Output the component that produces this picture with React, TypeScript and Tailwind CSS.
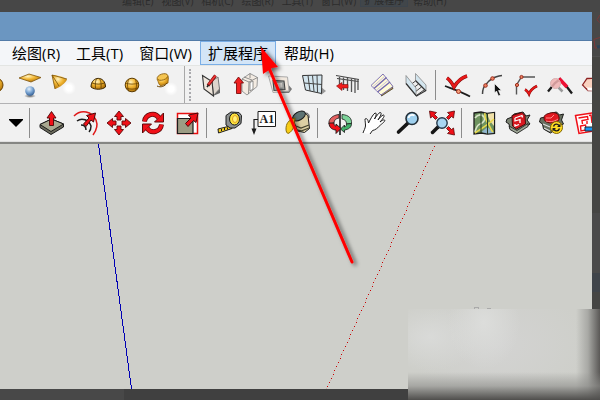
import React from 'react'

type Tool = { name: string; art: React.ReactNode }

const ghostMenus = ['编辑(E)', '视图(V)', '相机(C)', '绘图(R)', '工具(T)', '窗口(W)', '扩展程序', '帮助(H)']
const menus = ['绘图(R)', '工具(T)', '窗口(W)', '扩展程序', '帮助(H)']

const red = '#f01018'
const ink = '#1c1c1c'

// dotted axis, one dot every four pixels down
const axisDots = Array.from({ length: 61 }, (_, i) => ({
  x: Math.round(434 - i * 1.78),
  y: 146 + i * 4,
}))

const Defs = () => (
  <svg className="absolute size-0" aria-hidden="true">
    <defs>
      <radialGradient id="gold" cx="0.4" cy="0.3" r="0.75">
        <stop offset="0" stopColor="#fff3c0" />
        <stop offset="0.45" stopColor="#f2b632" />
        <stop offset="1" stopColor="#a86a06" />
      </radialGradient>
      <radialGradient id="steel" cx="0.4" cy="0.3" r="0.75">
        <stop offset="0" stopColor="#e4f0fb" />
        <stop offset="0.5" stopColor="#7ba6d4" />
        <stop offset="1" stopColor="#2d578c" />
      </radialGradient>
      <radialGradient id="mist">
        <stop offset="0.4" stopColor="#fff" />
        <stop offset="1" stopColor="#fff" stopOpacity="0" />
      </radialGradient>
      <radialGradient id="shade">
        <stop offset="0" stopColor="#222" stopOpacity="0.7" />
        <stop offset="1" stopColor="#222" stopOpacity="0" />
      </radialGradient>
    </defs>
  </svg>
)

const solidTools: Tool[] = [
  {
    name: 'Sphere',
    art: <circle cx="17" cy="17" r="7" fill="url(#gold)" stroke="#6b4300" />,
  },
  {
    name: 'Plane on sphere',
    art: (
      <>
        <path d="M6 10 16 6l12 3.500L18 14z" fill="url(#gold)" stroke="#7d5510" strokeWidth="0.8" />
        <ellipse cx="17" cy="28" rx="6" ry="2" fill="url(#shade)" />
        <circle cx="17" cy="23" r="4.800" fill="url(#steel)" />
      </>
    ),
  },
  {
    name: 'Cone',
    art: (
      <>
        <path d="M5 7c5 0 11 2 15 4.500-1 3-7 8-12 9.500z" fill="url(#gold)" />
        <path d="M5 7l3 14M5 7l7 11M5 7l15 4" stroke="#7a5208" strokeWidth="0.8" fill="none" />
        <circle cx="22" cy="20" r="7" fill="url(#mist)" />
      </>
    ),
  },
  {
    name: 'Dome',
    art: (
      <>
        <path d="M10 19C10 7.500 24.500 7.500 24.500 19 21 22 13.500 22 10 19z" fill="url(#gold)" stroke="#3a2500" />
        <path d="M14.500 20C14 14 15 11 16 10.500M20 20c.5-6-.5-8-2-9.500M11 15c4 1.500 9 1.500 12.500 0" stroke="#5c3b00" strokeWidth="0.8" fill="none" />
      </>
    ),
  },
  {
    name: 'Globe',
    art: (
      <>
        <circle cx="17" cy="17" r="6.800" fill="url(#gold)" stroke="#5c3b00" />
        <path d="M14 11c-2 4-2 8 0 12.500M20 11c2 4 2 8 0 12.500M10.500 15c4 1.500 9 1.500 13 0M11 20c4 1.500 8 1.500 12 0" stroke="#6b4300" strokeWidth="0.8" fill="none" />
      </>
    ),
  },
  {
    name: 'Lathe',
    art: (
      <>
        <path d="M8 11c2 4 1 5 4 7l7-3c0-3 1-4 0-7z" fill="url(#gold)" stroke="#8a5c08" strokeWidth="0.7" />
        <ellipse cx="13.500" cy="9" rx="5.500" ry="3" transform="rotate(-18 13.500 9)" fill="#f5c552" stroke="#8a5c08" strokeWidth="0.8" />
        <path d="M8 18c4 2 8 0 10-3" stroke="#6b4300" fill="none" />
        <circle cx="22" cy="21" r="7" fill="url(#mist)" />
      </>
    ),
  },
]

const wallTools: Tool[] = [
  {
    name: 'Edit wall',
    art: (
      <>
        <path d="M17 13l8 7v5l-7 3z" fill="#666" />
        <path d="M17 13l6-4 1.500 12-6 6.500z" fill="#ddd5cc" stroke="#777" />
        <path d="M7.500 7.500 17 13.500l1.500 14.500L9 21z" fill="#efe6dc" stroke="#333" strokeWidth="1.100" />
        <path d="M20.500 7.500 13 17.500" stroke="#7d0c0c" strokeWidth="3.200" />
        <path d="M20.500 7.500 13.500 16.500" stroke="#f03434" strokeWidth="1.800" />
        <path d="M13.500 17 12 19" stroke="#222" strokeWidth="1.500" />
      </>
    ),
  },
  {
    name: 'Raise wall',
    art: (
      <>
        <path d="M13 11 21 5.500l7.500 4-.5 9L18 27l-5-4z" fill="#f3ebe2" stroke="#999" />
        <path d="M13 11l7 3 8.500-4.500M20 14l-.5 12M21 5.500V10M15 9l8 3" fill="none" stroke="#777" strokeWidth="0.800" />
        <path d="M21 14.500l3-1.500v8l-3 2z" fill="#fff" stroke="#777" strokeWidth="0.800" />
        <path d="M9.500 9 14.500 15H12v10.500H7.500V15H5z" fill="#f02020" stroke="#7d0c0c" strokeWidth="0.900" />
      </>
    ),
  },
  {
    name: 'Opening',
    art: (
      <>
        <path d="M24 15l5 6-3 4H14z" fill="#777" />
        <path d="M5.500 8 24.500 9l1.500 14L10 24.500z" fill="#f1e8de" stroke="#aaa" />
        <path d="M10 12.500l11 .5 1 8.500-11 1z" fill="#a4a6a4" stroke="#444" strokeWidth="1.100" />
        <path d="M13 15h6l.5 4.500-6 .5z" fill="#e2dfda" />
      </>
    ),
  },
  {
    name: 'Curtain wall',
    art: (
      <>
        <path d="M24 19l5 4-5 4z" fill="#999" />
        <path d="M5.500 7.500 25 7l-.5 18.500L8.500 22z" fill="#d3e5ee" stroke="#333" />
        <path d="M11 7.500l2 15.500M15.500 7.500l1.500 16M20 7l.5 17.500M7 15l18 1.500" stroke="#444" fill="none" />
      </>
    ),
  },
  {
    name: 'Fence',
    art: (
      <>
        <path d="M5 7.500l23 4M6 10.500l21.500 3" stroke="#444" strokeWidth="1.200" />
        <path d="M8.500 9v7M12.500 9.500V22M16.500 10v13M20.500 10.500V24M24 11v14M27 11.500V22" stroke="#555" strokeWidth="1.300" />
        <path d="M5.500 18 11 14.500v2h6v3.500h-6v2.500z" fill="#f01c1c" stroke="#7d0c0c" strokeWidth="0.600" />
      </>
    ),
  },
  {
    name: 'Stairs',
    art: (
      <>
        <path d="M16.500 28 28 20.500l-1.500-3.500-10 7z" fill="#a48c50" stroke="#443a20" strokeWidth="0.800" />
        <path d="M6 17.500 18 6l10 12.500-12 8.500z" fill="#fffbd6" stroke="#7468b0" strokeWidth="0.900" />
        <path d="M9 20.500 21.500 9.500M12.500 24 25 14" stroke="#7468b0" strokeWidth="1.500" />
        <path d="M7.500 19 20 8M11 22.500 23.500 12" stroke="#c4bce4" strokeWidth="0.900" />
      </>
    ),
  },
  {
    name: 'Escalator',
    art: (
      <>
        <path d="M9 16l7-6 10 11-7 6z" fill="#eee" />
        <path d="M10 18l6.500-5M13 21l6.500-5M16 24l6.500-5M18 27l7-5" stroke="#444" />
        <path d="M7 7.500v8L17 28v-8z" fill="#d3e5ee" stroke="#888" strokeWidth="0.800" />
        <path d="M16.500 5.500V13L27 23v-6z" fill="#d3e5ee" stroke="#888" strokeWidth="0.800" />
        <path d="M7 15.500 17.500 28 27 22.500M16.500 12.500 27 23" fill="none" stroke="#333" strokeWidth="1.200" />
      </>
    ),
  },
]

const curveTools: Tool[] = [
  {
    name: 'Accept curve',
    art: (
      <>
        <path d="M4 18c8 3 15 5 25 10.500" stroke={ink} strokeWidth="1.800" fill="none" />
        <path d="M6 10c3 2 5 5 7 9 3-5 6-9 13-11" stroke="#7d0c0c" strokeWidth="3.500" fill="none" />
        <path d="M6 10c3 2 5 5 7 9 3-5 6-9 13-11" stroke="#e81818" strokeWidth="2.400" fill="none" />
        <circle cx="17.500" cy="23.500" r="2" fill="#f4a07a" stroke="#a03020" />
      </>
    ),
  },
  {
    name: 'Edit curve',
    art: (
      <>
        <path d="M7.500 26c0-5 1-7 3-9 2-3 4-5 7-6.500 3-2 6-2.500 9.500-3" stroke="#444" strokeWidth="1.500" fill="none" />
        <circle cx="10.500" cy="17.500" r="1.800" fill="#ee8060" stroke="#9c3020" />
        <circle cx="17.500" cy="10.500" r="1.800" fill="#ee8060" stroke="#9c3020" />
        <path d="M19.500 15.500v9.500l2-2 2 5 2-1-2-4.500h3z" fill="#111" stroke="#fff" strokeWidth="0.600" />
      </>
    ),
  },
  {
    name: 'Finish polyline',
    art: (
      <>
        <path d="M7.500 26.500V17l5-8h13.500" stroke="#555" strokeWidth="1.400" fill="none" />
        <circle cx="8" cy="17" r="1.600" fill="#ee8060" stroke="#9c3020" />
        <circle cx="12.500" cy="9" r="1.600" fill="#ee8060" stroke="#9c3020" />
        <path d="M16 21.500c2 1 3 2.500 4 4.500 1-3 4-6 8-8" stroke="#8e0c0c" strokeWidth="2.600" fill="none" />
        <path d="M16 21.500c2 1 3 2.500 4 4.500 1-3 4-6 8-8" stroke="#e81818" strokeWidth="1.600" fill="none" />
      </>
    ),
  },
  {
    name: 'Inspect curve',
    art: (
      <>
        <path d="M5 23.500 12 15l5-4 7 8 5 6.500" stroke={ink} strokeWidth="2.300" fill="none" />
        <path d="M16 10.500l8 8.500" stroke="#ee1034" strokeWidth="3.600" />
        <path d="M15.500 19.500l4 4" stroke="#999" strokeWidth="2.500" />
        <circle cx="12.500" cy="15.500" r="5" fill="#f0b0b0" fillOpacity="0.850" stroke="#d8b0b0" />
      </>
    ),
  },
  {
    name: 'Eraser',
    art: (
      <>
        <path d="M5.500 17 10 10.500l14-.5v13l-13-.5z" fill="#f9d2c0" stroke="#8c2020" strokeWidth="1.300" />
        <path d="M6 18l4.500 2v2.500l13 .5v-3l-13-.5z" fill="#fff" />
      </>
    ),
  },
]

const modifyTools: Tool[] = [
  {
    name: 'Push/Pull',
    art: (
      <>
        <path d="M6 18.500 17.500 13l12 5v3L17 28.500 6 21.500z" fill="#6a6a5c" stroke={ink} />
        <path d="M6 18.500 17.500 13l12 5L17 25.500z" fill="#a8a890" stroke={ink} />
        <path d="M17.500 5.500 22 12h-2.500v7.500h-4V12H13z" fill={red} stroke="#4a0808" strokeWidth="0.900" />
      </>
    ),
  },
  {
    name: 'Offset',
    art: (
      <>
        <path d="M6 10C13 3 24 5 28 14c2 5 0 11-3 15" stroke="#e01818" strokeWidth="1.500" fill="none" />
        <path d="M9 15c5-4 12-1 14 5 0 3-1 5-2 6M13 19c3 0 5 2 5 5" stroke={ink} strokeWidth="1.500" fill="none" />
        <path d="M15.500 18 21 12l-2.500-2.500 9-2.500-2 9-2.500-2-5 6.500z" fill={red} stroke="#4a0808" />
      </>
    ),
  },
  {
    name: 'Move',
    art: (
      <path
        d="M17 5l4.500 5.500H19V14h-4v-3.500h-2.500zM17 29l4.500-5.500H19V20h-4v3.500h-2.500zM5 17l5.500-4.500V15H14v4h-3.500v2.500zM29 17l-5.500-4.500V15H20v4h3.500v2.500z"
        fill={red}
        stroke="#5c0808"
        strokeWidth="0.900"
      />
    ),
  },
  {
    name: 'Rotate',
    art: (
      <>
        <path d="M8.500 15.500C9.500 8 19 5.500 23 12M25.500 18.500C24.500 26 15 28.500 11 22" stroke="#5c0808" strokeWidth="5" fill="none" />
        <path d="M27.500 7v9h-9zM6.500 27v-9h9z" fill={red} stroke="#5c0808" />
        <path d="M8.500 15.500C9.500 8 19 5.500 23 12M25.500 18.500C24.500 26 15 28.500 11 22" stroke={red} strokeWidth="3.400" fill="none" />
      </>
    ),
  },
  {
    name: 'Scale',
    art: (
      <>
        <path d="M7.500 7.500h20v20h-20z" fill="#fff" stroke="#e81010" strokeWidth="1.500" />
        <path d="M7.500 12.500H23v15H7.500z" fill="#9c9c84" stroke={ink} strokeWidth="1.200" />
        <path d="M15.500 17.500 21 12l-2.500-3 9.500-2-2 9.500-2.500-2-5.500 6z" fill={red} stroke="#4a0808" />
      </>
    ),
  },
]

const measureTools: Tool[] = [
  {
    name: 'Tape measure',
    art: (
      <>
        <path d="M5 23l14-3.500v3L5.500 27z" fill="#f5cf20" stroke={ink} />
        <path d="M8.500 23v2M11.500 22v2M14.500 21.500v2" stroke={ink} />
        <path d="M13 9.500 18 6l8 .5 2.500 3-.5 8-6 4.500h-5l-4-3z" fill="#8c9090" stroke={ink} />
        <ellipse cx="21.500" cy="13" rx="5" ry="6" fill="#fae23c" stroke={ink} />
        <ellipse cx="22" cy="13" rx="2.500" ry="3.500" fill="#fff37a" stroke="#e08c10" strokeWidth="0.800" />
      </>
    ),
  },
  {
    name: 'Text',
    art: (
      <>
        <path d="M11 5.500h17.500V20.500H11z" fill="#fff" stroke={ink} />
        <path d="M11 13.500H7V25" stroke={ink} strokeWidth="1.200" fill="none" />
        <path d="M4.500 22.500h5L7 29z" fill={ink} />
        <text x="12.500" y="17" fontSize="12" fontWeight="bold" fontFamily="Liberation Serif, serif" fill={ink}>A1</text>
      </>
    ),
  },
  {
    name: 'Paint bucket',
    art: (
      <>
        <path d="M23 12c0-7 6-6 5 0" fill="none" stroke="#555" />
        <path d="M12 13 16 7.500l6-2 5 4 1.500 13-5 4-7-1.500z" fill="#ddd0a4" stroke={ink} />
        <ellipse cx="18" cy="10" rx="7" ry="4" transform="rotate(-30 18 10)" fill="#5e7474" stroke={ink} />
        <path d="M15 20l5 2 8-3M16 24l4 1 8-3" stroke="#46452e" strokeWidth="1.300" fill="none" />
        <path d="M14 12C7 14 5 18 5 23c0 3 1 4 2 4.500 3-1 5-4 6-8z" fill="#f9cd16" stroke="#8b7008" />
      </>
    ),
  },
]

const cameraTools: Tool[] = [
  {
    name: 'Orbit',
    art: (
      <>
        <path d="M6 18c-1-5 4-9 10-9.500V12c-3 .5-5 2-5 5z" fill="#e46060" stroke={ink} strokeWidth="0.800" />
        <path d="M19 8.500c7 .5 10 4 9.500 9l-5 .5c0-3-1.500-4.500-4.500-5z" fill="#7cd49a" stroke={ink} strokeWidth="0.800" />
        <path d="M28.500 17.500c0 4-3 6-7 6.500v2.500L17.500 23l4-4v2c1.500-.5 2-1.500 2-3z" fill="#42b06a" stroke={ink} strokeWidth="0.800" />
        <path d="M17 5v24" stroke={ink} strokeWidth="1.600" />
        <path d="M6 17c0 5 4 7 7 7v3.500l5-5-5-4.500v2c-1.500 0-2-1-2-3z" fill={red} stroke={ink} strokeWidth="0.900" />
      </>
    ),
  },
  {
    name: 'Pan',
    art: (
      <path
        d="M6 27c1-3 2-4 2.500-7 0-3-.5-5-.5-7 1.500-1 3 0 3.500 4 2-4 4-8 6.500-10 1.500 0 2 1-.5 6 2-3 4-6 5.500-6.500 2 0 1.500 2-2 7.500 2-2.500 3.500-4.500 5.500-5 1.500.500.5 2.500-3.500 7 2-1.500 3.500-2.500 4.500-2 1 1-1 2.500-4 5-3 3-5 5-8 5.500L13 28"
        fill="#fff"
        stroke={ink}
      />
    ),
  },
  {
    name: 'Zoom',
    art: (
      <>
        <path d="M16.500 17.500 7.500 26" stroke="#151515" strokeWidth="3.600" strokeLinecap="round" />
        <circle cx="21" cy="12.500" r="6" fill="#9fd0ee" stroke="#222e38" strokeWidth="1.600" />
        <path d="M17.500 12c.5-2.500 3-4 6-2.500" stroke="#fff" strokeWidth="1.800" fill="none" />
      </>
    ),
  },
  {
    name: 'Zoom extents',
    art: (
      <>
        <path d="M13 21 7.500 26.500" stroke="#151515" strokeWidth="3.500" strokeLinecap="round" />
        <circle cx="17" cy="17" r="5.200" fill="#a9d6f2" stroke="#263848" strokeWidth="1.400" />
        <path d="M4.500 5l7 1.500-2 2 3 3-2 2-3-3-2 1.500zM29.500 5l-7 1.500 2 2-3 3 2 2 3-3 2 1.500zM29.500 29l-7-1.500 2-2-3-3 2-2 3 3 2-1.500z" fill={red} stroke="#5c0808" strokeWidth="0.800" />
      </>
    ),
  },
]

const warehouseTools: Tool[] = [
  {
    name: 'Add location',
    art: (
      <>
        <path d="M7 7l7-1 6 1.500L27.500 6.500v21l-7 .5-6-1L7 28z" fill="#6f9460" stroke={ink} strokeWidth="1.300" />
        <path d="M20 8l7-1v13l-4-5z" fill="#f0e0a8" />
        <path d="M14.500 26l6-5 6.500 6-7 .5z" fill="#8fb4cc" />
        <path d="M8 12c3-4 7-4 9-1s-1 6-4 7-4 4-5 8" fill="none" stroke="#d8e4c8" strokeWidth="1.600" />
        <path d="M27 13C20 20 15 22 8 27M18 7c-1 6 2 8 4 12s2 5 4 7" fill="none" stroke="#e8d84c" strokeWidth="1.600" />
        <path d="M14 6v21M20.500 7v21" stroke="#283820" />
      </>
    ),
  },
  {
    name: '3D Warehouse',
    art: (
      <>
        <path d="M6 13l5-2 2-3 9-2 3 4 4-1-3 5 3 4-13 9-7-4-1-5-3-2z" fill="#7c8474" stroke={ink} />
        <path d="M11 9.500 21 6.500l3 3 .5 8.500-9 5-4-3z" fill="#d81820" stroke="#4a0808" />
        <path d="M14 12l7-2.500.5 2M14 12v3l5-1.500v3.500M14 18v2l4-1.500" fill="none" stroke="#fff" strokeWidth="1.300" />
        <path d="M8 20l8 4.500 11-7v3l-11 7-7-4z" fill="#9ca494" stroke={ink} strokeWidth="0.800" />
      </>
    ),
  },
  {
    name: 'Extension Warehouse',
    art: (
      <>
        <path d="M5.500 12l5-1 2-3 9-2 3 3 4-1-2 6 2 4-13 9-7-4-1-5-3-2z" fill="#687060" stroke={ink} />
        <path d="M9 12c0-4 4-4 6-5 5-1 8 0 9 4s-3 6-7 6-8-1-8-5z" fill="#e01820" stroke="#5c0808" />
        <path d="M11 12h5l3-3M11 15c3 1 8 1 12-2" stroke="#ff8c8c" fill="none" />
        <path d="M8 18l7 3M9 22l6 3" stroke="#ddd" strokeWidth="1.200" />
        <circle cx="21.500" cy="21.500" r="6" fill="#ffdc24" stroke="#806400" />
        <path d="M18.500 20.500c1-3 4-3 5.500-1M24.500 22.500c-1 3-4 3-5.500 1" stroke={ink} strokeWidth="1.400" fill="none" />
        <path d="M25.500 17.500v3.500h-3.500zM17.500 25.500V22H21z" fill={ink} />
      </>
    ),
  },
  {
    name: 'Send to LayOut',
    art: (
      <>
        <path d="M6.500 9.500 26 6.500l2 18-18 3z" fill="#fff" stroke={red} strokeWidth="1.500" />
        <path d="M9.500 12l9-1.500.5 3-6 1 .5 3.500M20 9.500l2-.5 1 8M11.500 20l5-1 .5 5-5 1zM18 15v3" fill="none" stroke={red} strokeWidth="1.400" />
        <path d="M16 21h8v-3l6 5-6 5v-3h-8z" fill="#1896f0" stroke="#202838" />
      </>
    ),
  },
]

const ToolGroup = ({ tools }: { tools: Tool[] }) => (
  <div className="flex shrink-0">
    {tools.map((tool) => (
      <button key={tool.name} type="button" aria-label={tool.name} className="size-[34px] shrink-0">
        <svg viewBox="0 0 34 34" className="size-full">
          {tool.art}
        </svg>
      </button>
    ))}
  </div>
)

const Separator = () => <div className="mx-[2px] h-[30px] w-px shrink-0 bg-[#8c8c8c]" />

const MenuBar = () => (
  <nav className="flex h-[25px] shrink-0 border-b border-[#e3e5e3] bg-[#f4f6f9] pl-1 text-[15px] leading-6 text-black">
    {menus.map((label) => (
      <button
        key={label}
        type="button"
        className={
          label === '扩展程序'
            ? 'h-6 shrink-0 border border-[#7aaee6] bg-[#d3e5f7] px-[7px] leading-[22px]'
            : 'h-6 shrink-0 px-2'
        }
      >
        {label}
      </button>
    ))}
  </nav>
)

const Toolbars = () => (
  <div className="shrink-0 bg-[#f1f1f1]">
    <div className="flex h-[38px] items-center overflow-hidden border-b border-[#b2b2b4]">
      <div className="-ml-[21px] shrink-0">
        <ToolGroup tools={solidTools} />
      </div>
      <div className="ml-px h-full w-px shrink-0 bg-[#a8a8a8]" />
      <div className="mx-1 h-8 shrink-0 border-l-2 border-dotted border-[#a9a9ad]" />
      <ToolGroup tools={wallTools} />
      <Separator />
      <div className="w-[3px] shrink-0" />
      <ToolGroup tools={curveTools} />
    </div>
    <div className="flex h-[38px] items-center overflow-hidden border-b border-[#e0e0e0]">
      <button type="button" aria-label="More shapes" className="flex w-[27px] shrink-0 justify-end pr-1">
        <svg viewBox="0 0 14 8" className="h-2 w-[14px]">
          <path d="M0 0h14v1L7 8 0 1z" fill="#000" />
        </svg>
      </button>
      <Separator />
      <div className="w-[2px] shrink-0" />
      <ToolGroup tools={modifyTools} />
      <Separator />
      <div className="w-1 shrink-0" />
      <ToolGroup tools={measureTools} />
      <Separator />
      <div className="w-[3px] shrink-0" />
      <ToolGroup tools={cameraTools} />
      <Separator />
      <div className="w-[3px] shrink-0" />
      <ToolGroup tools={warehouseTools} />
    </div>
  </div>
)

const Viewport = () => (
  <main className="min-h-0 flex-1 overflow-hidden border-t-2 border-[#858683] bg-[#cecfca]">
    <svg className="h-[245px] w-[592px]" viewBox="0 144 592 245" shapeRendering="crispEdges">
      <path d="M98.500 144 131.500 389" stroke="#0000b4" />
      {axisDots.map((dot) => (
        <rect key={dot.y} x={dot.x} y={dot.y} width="1" height="1" fill="#c80000" />
      ))}
      {axisDots.map((dot) => (
        <rect key={dot.y} x={dot.x - 1} y={dot.y + 2} width="1" height="1" fill="#c80000" fillOpacity="0.15" />
      ))}
      <path d="M474 308.500c1-2 4-2 5 0M487 308.500h4" stroke="#aaa" fill="none" />
    </svg>
  </main>
)

const Pointer = () => (
  <svg className="pointer-events-none absolute top-0 left-0 h-[400px] w-[600px]" viewBox="0 0 600 400">
    <filter id="drop" x="-20%" y="-20%" width="150%" height="140%">
      <feDropShadow dx="3" dy="2" stdDeviation="2" floodColor="#000" floodOpacity="0.600" />
    </filter>
    <g filter="url(#drop)">
      <path d="M261 47l17 20-6 1-3 2-6 4z" fill="#f00" />
      <path d="M269 68 352 262" stroke="#f00" strokeWidth="3" strokeLinecap="round" />
    </g>
  </svg>
)

const App = () => {
  return (
    <div className="relative flex h-screen flex-col overflow-hidden bg-[#474747] font-['Open_Sans','Noto_Sans_CJK_SC',sans-serif]">
      <Defs />
      <header className="flex h-3 shrink-0 items-end overflow-hidden pb-[5px] pl-[122px] text-[10px] text-[#2c2c2c]">
        {ghostMenus.map((label) => (
          <span
            key={label}
            className={
              label === '扩展程序'
                ? 'mr-[5px] -ml-1 shrink-0 border border-[#3c444c] bg-[#41464a] px-[3px] leading-3'
                : 'mr-2 shrink-0 leading-3'
            }
          >
            {label}
          </span>
        ))}
      </header>
      <div className="flex min-h-0 flex-1">
        <div className="flex min-w-0 flex-1 flex-col">
          <div className="h-[29px] shrink-0 border-b border-[#527ba8] bg-[#6b96c1]" />
          <MenuBar />
          <Toolbars />
          <Viewport />
        </div>
        <aside className="flex w-2 shrink-0 flex-col bg-[#454543]">
          <svg viewBox="0 0 8 45" className="h-[45px] w-2 border-b border-[#505050] bg-[#484848]">
            <path d="M8 3 5 8l3 3M2 28l6-2M2 28l1 9 5-1" stroke="#7c3838" fill="none" />
            <path d="M5 34h3v3H5z" fill="#2c4458" />
          </svg>
          <div className="h-[156px]" />
          <div className="h-[60px] bg-[#4a4a4a]" />
          <div className="h-[19px] bg-[#3f444a]" />
        </aside>
      </div>
      <footer className="flex h-[11px] shrink-0 bg-[#404040]">
        <div className="w-[124px] bg-[#484848]" />
      </footer>
      <Pointer />
      <div className="absolute right-0 bottom-0 h-[91px] w-48 bg-[#cecfca]">
        <div className="absolute inset-0 bg-[radial-gradient(ellipse_36px_46px_at_76px_14px,#dcdddb,transparent),radial-gradient(ellipse_50px_34px_at_22px_28px,#d9dad8,transparent),radial-gradient(ellipse_90px_60px_at_90px_36px,#d3d3d2,transparent)]" />
        <div className="absolute inset-y-0 right-0 w-6 bg-linear-to-r from-transparent via-[#8f8f8c]/60 to-[#5a5856]" />
        <div className="absolute inset-x-0 bottom-0 h-7 bg-linear-to-b from-transparent via-[#8c8c89]/60 to-[#4f4e4c]" />
      </div>
    </div>
  )
}

export default App
